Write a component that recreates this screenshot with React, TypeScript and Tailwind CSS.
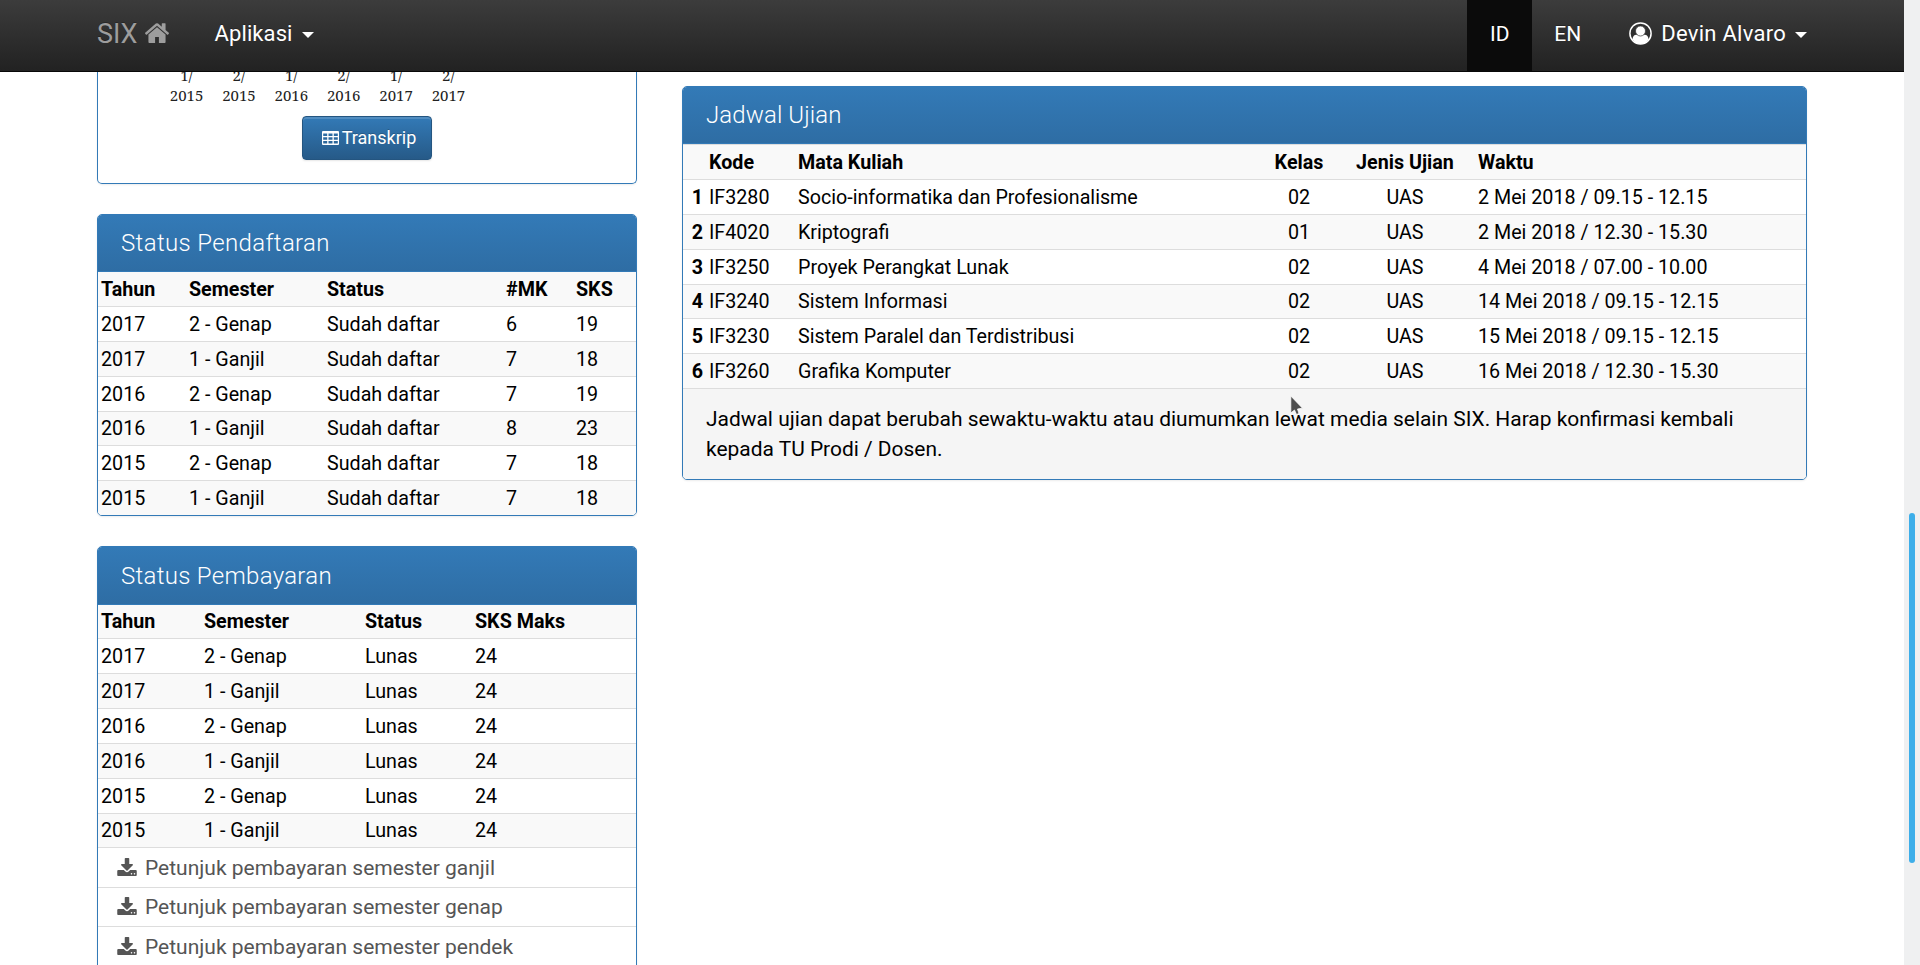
import React from 'react';

type Row = string[];

const registration: Row[] = [
  ['2017', '2 - Genap', 'Sudah daftar', '6', '19'],
  ['2017', '1 - Ganjil', 'Sudah daftar', '7', '18'],
  ['2016', '2 - Genap', 'Sudah daftar', '7', '19'],
  ['2016', '1 - Ganjil', 'Sudah daftar', '8', '23'],
  ['2015', '2 - Genap', 'Sudah daftar', '7', '18'],
  ['2015', '1 - Ganjil', 'Sudah daftar', '7', '18'],
];

const payment: Row[] = [
  ['2017', '2 - Genap', 'Lunas', '24'],
  ['2017', '1 - Ganjil', 'Lunas', '24'],
  ['2016', '2 - Genap', 'Lunas', '24'],
  ['2016', '1 - Ganjil', 'Lunas', '24'],
  ['2015', '2 - Genap', 'Lunas', '24'],
  ['2015', '1 - Ganjil', 'Lunas', '24'],
];

const exams: Row[] = [
  ['1', 'IF3280', 'Socio-informatika dan Profesionalisme', '02', 'UAS', '2 Mei 2018 / 09.15 - 12.15'],
  ['2', 'IF4020', 'Kriptografi', '01', 'UAS', '2 Mei 2018 / 12.30 - 15.30'],
  ['3', 'IF3250', 'Proyek Perangkat Lunak', '02', 'UAS', '4 Mei 2018 / 07.00 - 10.00'],
  ['4', 'IF3240', 'Sistem Informasi', '02', 'UAS', '14 Mei 2018 / 09.15 - 12.15'],
  ['5', 'IF3230', 'Sistem Paralel dan Terdistribusi', '02', 'UAS', '15 Mei 2018 / 09.15 - 12.15'],
  ['6', 'IF3260', 'Grafika Komputer', '02', 'UAS', '16 Mei 2018 / 12.30 - 15.30'],
];

const terms = ['1/2015', '2/2015', '1/2016', '2/2016', '1/2017', '2/2017'];

const guides = [
  { name: 'ganjil', height: 'h-[40px]' },
  { name: 'genap', height: 'h-[39px]' },
  { name: 'pendek', height: 'h-[40px]' },
];

function Caret({ className = '' }: { className?: string }) {
  return (
    <svg className={className} width="12" height="6" viewBox="0 0 12 6" fill="#fff">
      <path d="M0 0h12L6 6z" />
    </svg>
  );
}

function HomeIcon() {
  return (
    <svg className="ml-[7px]" width="24" height="20" viewBox="89 240 1614 1296" preserveAspectRatio="none" fill="#9d9d9d">
      <path d="M1472 992v480q0 26-19 45t-45 19h-384v-384h-256v384h-384q-26 0-45-19t-19-45v-480q0-1 .5-3t.5-3l575-474 575 474q1 2 1 6zm223-69l-62 74q-8 9-21 11h-3q-13 0-21-7l-692-577-692 577q-12 8-24 7-13-2-21-11l-62-74q-8-10-7-23.500t11-21.500l719-599q32-26 76-26t76 26l244 204v-195q0-14 9-23t23-9h192q14 0 23 9t9 23v408l219 182q10 8 11 21.500t-7 23.500z" />
    </svg>
  );
}

function UserIcon() {
  return (
    <svg className="ml-[26px]" width="23" height="23" viewBox="0 0 23 23">
      <circle cx="11.500" cy="11.500" r="10.600" fill="none" stroke="#fff" strokeWidth="1.500" />
      <path d="M3.500 17.500q.2-4.700 4-4.700h8q3.800 0 4 4.700-3 4.500-8 4.500t-8-4.500z" fill="#fff" />
      <circle cx="11.500" cy="9" r="5" fill="#fff" stroke="#333" strokeWidth=".7" />
    </svg>
  );
}

function GridIcon() {
  return (
    <svg className="mr-[3px]" width="17" height="14" viewBox="0 0 17 14" fill="#fff">
      <path
        fillRule="evenodd"
        d="M1 0h15q1 0 1 1v12q0 1-1 1H1q-1 0-1-1V1q0-1 1-1zM1.200 2.500v2.400h4V2.500zM6.500 2.500v2.400h4V2.500zM11.800 2.500v2.400h4V2.500zM1.200 6.200v2.500h4V6.200zM6.500 6.200v2.500h4V6.200zM11.800 6.200v2.500h4V6.200zM1.200 10v2.600h4V10zM6.500 10v2.600h4V10zM11.800 10v2.600h4V10z"
      />
    </svg>
  );
}

function DownloadIcon() {
  return (
    <svg className="mr-[8px] mb-[4px]" width="20" height="18" viewBox="0 0 1664 1536" fill="currentColor">
      <path d="M1280 1344q0-26-19-45t-45-19-45 19-19 45 19 45 45 19 45-19 19-45zm256 0q0-26-19-45t-45-19-45 19-19 45 19 45 45 19 45-19 19-45zm128-224v320q0 40-28 68t-68 28h-1472q-40 0-68-28t-28-68v-320q0-40 28-68t68-28h465l135 136q58 56 136 56t136-56l136-136h464q40 0 68 28t28 68zm-325-569q17 41-14 70l-448 448q-18 19-45 19t-45-19l-448-448q-31-29-14-70 17-39 59-39h256v-448q0-26 19-45t45-19h256q26 0 45 19t19 45v448h256q42 0 59 39z" />
    </svg>
  );
}

function Panel({ title, headClass, children }: { title: string; headClass: string; children: React.ReactNode }) {
  return (
    <section className="overflow-hidden rounded-[5px] border border-[#337ab7] bg-white shadow-[0_1px_2px_rgba(0,0,0,0.08)]">
      <h3
        className={`flex items-center border-b border-[#337ab7] bg-linear-to-b from-[#337ab7] to-[#2e6da4] pl-[23px] text-[24px] font-light text-white ${headClass}`}
      >
        {title}
      </h3>
      {children}
    </section>
  );
}

interface TableProps {
  grid: string;
  head: Row;
  rows: Row[];
  headClass: string;
  shortRow: number;
  center?: number[];
  boldFirst?: boolean;
}

function Table({ grid, head, rows, headClass, shortRow, center = [], boldFirst = false }: TableProps) {
  return (
    <div>
      {[head, ...rows].map((row, r) => (
        <div
          key={r}
          className={`grid items-center text-[19.7px] leading-[30px] ${grid} ${r % 2 === 0 ? 'bg-[#f9f9f9]' : 'bg-white'} ${
            r === 0 ? `font-bold ${headClass}` : `border-t border-[#ddd] ${r === shortRow ? 'h-[34px]' : 'h-[35px] pt-[2px]'}`
          }`}
        >
          {row.map((cell, c) => (
            <div
              key={c}
              className={`whitespace-nowrap ${center.includes(c) ? 'text-center' : ''} ${boldFirst && c === 0 ? 'pr-[6px] text-right font-bold' : ''}`}
            >
              {cell}
            </div>
          ))}
        </div>
      ))}
    </div>
  );
}

export default function App() {
  return (
    <div className="relative flex h-[965px] w-[1920px] flex-col overflow-hidden bg-white font-[Roboto,sans-serif] text-black">
      <div className="flex min-h-0 flex-1">
        <div className="flex min-w-0 flex-1 flex-col">
          <nav className="z-10 flex h-[72px] shrink-0 items-center justify-between border-b border-[#080808] bg-linear-to-b from-[#3c3c3c] to-[#222] px-[97px] text-[22px] text-white [text-shadow:0_-1px_0_rgba(0,0,0,0.25)]">
            <div className="flex items-center pb-[5px]">
              <span className="pt-[2px] text-[27px] leading-[36px] text-[#9d9d9d]">SIX</span>
              <HomeIcon />
              <span className="ml-[46px] tracking-[0.1px]">Aplikasi</span>
              <Caret className="mt-1 ml-[9px]" />
            </div>
            <div className="flex h-full items-center">
              <div className="flex h-full w-[65px] items-center justify-center bg-[#0b0b0b] pb-[2px] text-[21px]">ID</div>
              <div className="flex h-full w-[71px] items-center justify-center pb-[2px] text-[21px]">EN</div>
              <div className="flex h-full items-center pb-[5px]">
                <UserIcon />
                <span className="ml-[9px] tracking-[0.27px]">Devin Alvaro</span>
                <Caret className="mt-1 ml-[9px]" />
              </div>
            </div>
          </nav>
          <main className="flex min-h-0 flex-1 items-start gap-[45px] px-[97px]">
            <div className="flex w-[540px] flex-col gap-[30px]">
              <section className="flex h-[112px] flex-col items-center rounded-b-[5px] border border-t-0 border-[#337ab7] shadow-[0_1px_2px_rgba(0,0,0,0.08)]">
                <div className="-mt-[7px] mr-[99px] grid grid-cols-6 text-center font-['Noto_Serif','Noto_Sans',serif] text-[15px] leading-[20px] text-[#222]">
                  {terms.map((t) => (
                    <span key={t} className="w-[52.400px]">{t.slice(0, 2)}<br />{t.slice(2)}</span>
                  ))}
                </div>
                <button className="mt-[11px] flex h-[44px] w-[130px] items-center justify-center rounded border border-[#245580] bg-linear-to-b from-[#337ab7] to-[#265a88] pb-[1px] pl-[4px] text-[18px] text-white shadow-[inset_0_2px_0_rgba(255,255,255,0.15),0_1px_2px_rgba(0,0,0,0.1)] [text-shadow:0_-1px_0_rgba(0,0,0,0.2)]">
                  <GridIcon />
                  Transkrip
                </button>
              </section>
              <Panel title="Status Pendaftaran" headClass="h-[57px] tracking-[0.36px]">
                <Table
                  grid="grid-cols-[88px_138px_179px_70px_1fr] pl-[3px]"
                  head={['Tahun', 'Semester', 'Status', '#MK', 'SKS']}
                  rows={registration}
                  headClass="h-[34px] pt-[2px]"
                  shortRow={4}
                />
              </Panel>
              <Panel title="Status Pembayaran" headClass="h-[58px] tracking-[0.3px]">
                <Table
                  grid="grid-cols-[103px_161px_110px_1fr] pl-[3px]"
                  head={['Tahun', 'Semester', 'Status', 'SKS Maks']}
                  rows={payment}
                  headClass="h-[33px]"
                  shortRow={6}
                />
                <div className="pb-4">
                  {guides.map((g) => (
                    <a key={g.name} className={`flex items-center border-t border-[#ddd] pt-[2px] pl-[19px] text-[21px] text-[#555] ${g.height}`}>
                      <DownloadIcon />
                      Petunjuk pembayaran semester {g.name}
                    </a>
                  ))}
                </div>
              </Panel>
            </div>
            <div className="w-[1125px] pt-[14px]">
              <Panel title="Jadwal Ujian" headClass="h-[57px] tracking-[0.1px]">
                <Table
                  grid="grid-cols-[26px_89px_446px_110px_102px_1fr] [&>*:nth-child(6)]:pl-[22px]"
                  head={['', 'Kode', 'Mata Kuliah', 'Kelas', 'Jenis Ujian', 'Waktu']}
                  rows={exams}
                  headClass="h-[35px] border-t border-[#ddd] pt-[2px]"
                  shortRow={4}
                  center={[3, 4]}
                  boldFirst
                />
                <div className="relative border-t border-[#ddd] bg-[#f5f5f5] px-[23px] py-[15px] text-[20.950px] leading-[30px]">
                  <svg className="absolute top-[6px] left-[607px]" width="14" height="22" viewBox="0 0 14 22">
                    <path d="M.8 1v17l3.700-3 2 4.500 2.500-1-1.500-4.500 5-.8z" fill="#4d4d4d" stroke="#fff" strokeWidth=".8" />
                  </svg>
                  <p className="relative">
                    Jadwal ujian dapat berubah sewaktu-waktu atau diumumkan lewat media selain SIX. Harap konfirmasi kembali kepada TU Prodi / Dosen.
                  </p>
                </div>
              </Panel>
            </div>
          </main>
        </div>
        <div className="w-4 shrink-0 bg-[#eff0f1] pt-[513px] pl-[5px]">
          <div className="h-[350px] w-[6px] rounded-full bg-[#3daee9]" />
        </div>
      </div>
    </div>
  );
}
